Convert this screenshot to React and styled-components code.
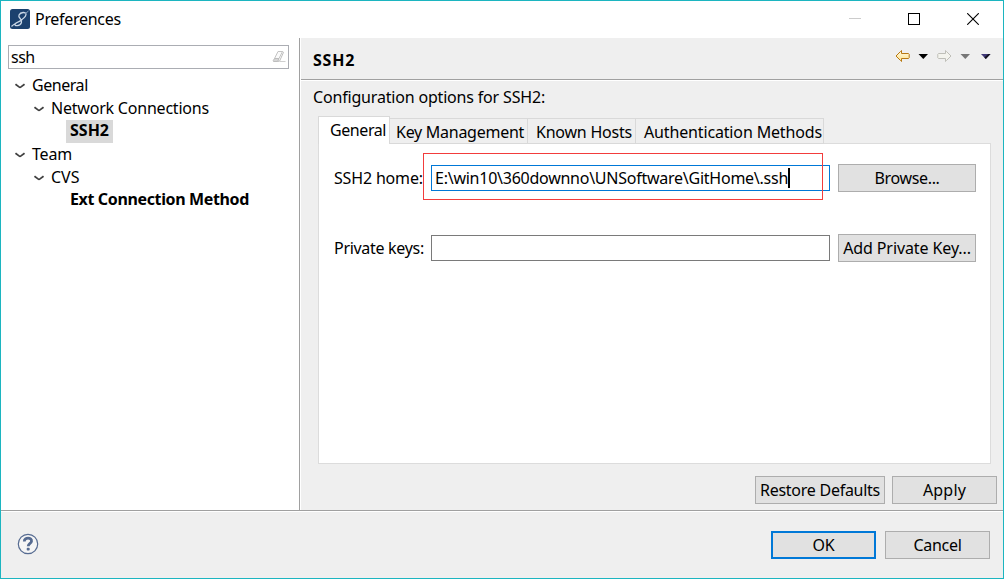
import React from "react";
import styled, { createGlobalStyle, css } from "styled-components";

const GlobalStyle = createGlobalStyle`
  * { box-sizing: border-box; }
  html, body { margin: 0; padding: 0; overflow: hidden; }
  body { font-family: "Noto Sans", "Open Sans", sans-serif; font-size: 16px; color: #000; }
`;

const Window = styled.div`
  width: 1004px;
  height: 579px;
  border: 1px solid #1cb5c0;
  background: #efefef;
  display: flex;
  flex-direction: column;
`;

const TitleBar = styled.header`
  height: 37px;
  flex: none;
  background: #fff;
  display: flex;
  align-items: center;
  padding: 0 24px 2px 9px;
`;

const Text = styled.span`
  display: block;
  white-space: pre;
  line-height: 20px;
  letter-spacing: ${(p) => p.$track ?? -0.22}px;
  font-weight: ${(p) => (p.$bold ? 700 : 400)};
`;

const Title = styled(Text)`
  margin-left: 5px;
  padding-top: 1px;
  flex: 1;
`;

const WindowControls = styled.div`
  display: flex;
  align-items: center;
  gap: 47px;
  svg { display: block; }
`;

const Main = styled.div`
  height: 472px;
  flex: none;
  display: flex;
`;

const Sidebar = styled.aside`
  width: 299px;
  flex: none;
  background: #fff;
  border-right: 1px solid #a0a0a0;
  padding: 7px 10px 0 7px;
`;

const Search = styled.div`
  height: 24px;
  border: 1px solid #abadb3;
  display: flex;
  align-items: center;
  justify-content: space-between;
  padding: 0 2px;
`;

const Tree = styled.div`
  padding-top: 5px;
  display: flex;
  flex-direction: column;
`;

const TreeRow = styled.div`
  height: 23px;
  display: flex;
  align-items: flex-start;
  padding-left: ${(p) => 7 + p.$level * 19}px;
`;

const TreeLabel = styled(Text)`
  padding: 0 4px;
  line-height: ${(p) => (p.$bold ? 20 : 22)}px;
  ${(p) => p.$selected && css`
    width: 47px;
    height: 23px;
    background: #d9d9d9;
  `}
`;

const Twisty = styled.div`
  width: 13px;
  padding-top: 9px;
  svg { display: block; }
`;

const Content = styled.main`
  flex: 1;
  border-left: 1px solid #fff;
  display: flex;
  flex-direction: column;
`;

const PageHeader = styled.div`
  height: 42px;
  flex: none;
  border-bottom: 1px solid #a0a0a0;
  box-shadow: 0 1px 0 #fff;
  display: flex;
  align-items: center;
  justify-content: space-between;
  padding: 2px 10px 0 12px;
`;

const Nav = styled.div`
  height: 32px;
  svg { display: block; }
`;

const Description = styled(Text)`
  padding: 7px 0 0 12px;
  height: 36px;
`;

const Tabs = styled.div`
  height: 28px;
  margin-left: 17px;
  display: flex;
  align-items: flex-end;
  position: relative;
`;

const Tab = styled.div`
  height: ${(p) => (p.$active ? 28 : 26)}px;
  width: ${(p) => p.$w}px;
  border: 1px solid #d9d9d9;
  border-bottom: ${(p) => (p.$active ? "0" : "1px solid #d9d9d9")};
  ${(p) => !p.$active && css`border-left: 0;`}
  background: ${(p) => (p.$active ? "#fff" : "#efefef")};
  padding: 3px 0 0 ${(p) => p.$pad}px;
  z-index: 1;
`;

const Panel = styled.section`
  width: 673px;
  height: 321px;
  margin: -1px 0 0 17px;
  border: 1px solid #dcdcdc;
  background: #fff;
  padding: 20px 14px 0 15px;
`;

const Field = styled.div`
  height: 28px;
  display: flex;
  align-items: center;
  margin-bottom: 42px;
`;

const FieldLabel = styled(Text)`
  width: 97px;
  flex: none;
`;

const Input = styled.div`
  position: relative;
  flex: none;
  width: 399px;
  height: 26px;
  border: 1px solid ${(p) => (p.$focus ? "#0078d7" : "#7a7a7a")};
  margin-right: 8px;
  padding-left: 3px;
  display: flex;
  align-items: center;
`;

const Caret = styled.i`
  width: 2px;
  height: 20px;
  background: #000;
`;

const Highlight = styled.div`
  position: absolute;
  left: -9px;
  top: -13px;
  width: 400px;
  height: 47px;
  border: 1px solid #f23c3c;
`;

const Button = styled.div`
  width: ${(p) => p.$w}px;
  height: 28px;
  flex: none;
  background: #e1e1e1;
  border: ${(p) => (p.$primary ? "2px solid #0078d7" : "1px solid #adadad")};
  display: flex;
  align-items: center;
  justify-content: center;
`;

const PageActions = styled.div`
  display: flex;
  justify-content: flex-end;
  gap: 7px;
  padding: 12px 6px 0 0;
`;

const Footer = styled.footer`
  flex: 1;
  border-top: 1px solid #a0a0a0;
  box-shadow: inset 0 1px 0 #fff;
  display: flex;
  align-items: center;
  gap: 9px;
  padding: 1px 13px 0 16px;
`;

const HelpButton = styled.div`
  flex: 1;
  padding-bottom: 2px;
  svg { display: block; }
`;

const AppIcon = () => (
  <svg width="20" height="20" viewBox="0 0 20 20">
    <rect width="20" height="20" rx="2.5" fill="#1b416e" />
    <path d="M1.500 17.500C5 13.500 15.500 11 16 5.500C16 2.500 10.500 3 9 6C7.500 9.500 13 9.500 11.500 13.500C10 17.500 4 17.500 5 15C6 13 9.500 13 12 11" fill="none" stroke="#c9d7e6" strokeWidth="1.300" />
    <path d="M15 5L18.500 2" stroke="#8fa8c4" />
  </svg>
);

const Eraser = () => (
  <svg width="14" height="14" viewBox="0 0 14 14">
    <path d="M6 1.500h4.500l-3.500 7h-4.500z" fill="#fafafa" stroke="#c4c4c4" />
    <path d="M2.500 8.500h4.500l-1.300 3h-4.200l-.3-.8z" fill="#d6d6d6" stroke="#bdbdbd" />
    <path d="M10.500 1.500l1 .8-4 9h-2" fill="none" stroke="#bdbdbd" />
    <path d="M8 11.500h5.500" stroke="#cfcfcf" />
  </svg>
);

const Chevron = () => (
  <svg width="10" height="6" viewBox="0 0 10 6">
    <path d="M.5 1.200L4 3.900Q5 4.700 6 3.900L9.500 1.200" fill="none" stroke="#404040" strokeWidth="1.700" />
  </svg>
);

const NavIcons = () => (
  <svg width="98" height="24" viewBox="0 0 98 24">
    <defs>
      <linearGradient id="back" x1="0" y1="0" x2="0" y2="1">
        <stop offset="0" stopColor="#fffbe5" />
        <stop offset="1" stopColor="#ffe28a" />
      </linearGradient>
    </defs>
    <path d="M1 12L5.500 7.500L6.500 6.500V9.500H13.500L14.200 10.200V13.800L13.500 14.500H6.500V17.500L5.500 16.500z" fill="url(#back)" stroke="#b87812" />
    <path d="M23.500 10h9.500l-4.700 5z" fill="#000" />
    <path d="M56 12L51.500 7.500L50.500 6.500V9.500H43.500L42.800 10.200V13.800L43.500 14.500H50.500V17.500L51.500 16.500z" fill="#f4f4ee" stroke="#bfbfb8" />
    <path d="M65.500 10h9.500l-4.700 5z" fill="#777" />
    <path d="M86 10h9.500l-4.700 5z" fill="#3f3878" />
    <path d="M95.500 10l-4.700 5-1.500-1.600 4-3.400z" fill="#15131f" />
  </svg>
);

const HelpIcon = () => (
  <svg width="22" height="22" viewBox="0 0 22 22">
    <circle cx="11" cy="11" r="9.700" fill="#f5f5f5" stroke="#566b91" strokeWidth="1.200" />
    <path d="M7.300 8.500C7.300 3.800 15 4.200 14.500 8.300C14.200 10.500 11.200 10.300 11.200 13.300" fill="none" stroke="#566b91" strokeWidth="2.800" />
    <rect x="9.700" y="14.800" width="3" height="2.800" rx="1" fill="#566b91" />
  </svg>
);

const TREE = [
  { label: "General", level: 0, open: true, track: -0.45 },
  { label: "Network Connections", level: 1, open: true, track: -0.21 },
  { label: "SSH2", level: 2, bold: true, selected: true, track: 0 },
  { label: "Team", level: 0, open: true, track: -0.2 },
  { label: "CVS", level: 1, open: true, track: 0 },
  { label: "Ext Connection Method", level: 2, bold: true, track: -0.36 },
];

export default function App() {
  return (
    <>
      <GlobalStyle />
      <Window>
        <TitleBar>
          <AppIcon />
          <Title $track={-0.3}>Preferences</Title>
          <WindowControls>
            <svg width="12" height="12"><path d="M0 5.500h12" stroke="#ccc" /></svg>
            <svg width="12" height="12"><rect x=".5" y=".5" width="11" height="11" fill="none" stroke="#000" /></svg>
            <svg width="12" height="12"><path d="M.2 .2l11.600 11.600M11.800 .2l-11.600 11.600" stroke="#000" strokeWidth="1.100" /></svg>
          </WindowControls>
        </TitleBar>
        <Main>
          <Sidebar>
            <Search><Text $track={-0.5}>ssh</Text><Eraser /></Search>
            <Tree>
              {TREE.map((n) => (
                <TreeRow key={n.label} $level={n.level}>
                  <Twisty>{n.open && <Chevron />}</Twisty>
                  <TreeLabel $bold={n.bold} $selected={n.selected} $track={n.track}>{n.label}</TreeLabel>
                </TreeRow>
              ))}
            </Tree>
          </Sidebar>
          <Content>
            <PageHeader><Text $bold $track={0.8}>SSH2</Text><Nav><NavIcons /></Nav></PageHeader>
            <Description $track={-0.18}>Configuration options for SSH2:</Description>
            <Tabs>
              <Tab $active $w={72} $pad={11}><Text $track={-0.42}>General</Text></Tab>
              <Tab $w={138} $pad={6}><Text $track={-0.27}>Key Management</Text></Tab>
              <Tab $w={108} $pad={8}><Text $track={-0.22}>Known Hosts</Text></Tab>
              <Tab $w={188} $pad={8}><Text $track={-0.15}>Authentication Methods</Text></Tab>
            </Tabs>
            <Panel>
              <Field>
                <FieldLabel $track={-0.17}>SSH2 home:</FieldLabel>
                <Input $focus><Text $track={-0.25}>E:\win10\360downno\UNSoftware\GitHome\.ssh</Text><Caret /><Highlight /></Input>
                <Button $w={138}><Text $track={-0.35}>Browse...</Text></Button>
              </Field>
              <Field>
                <FieldLabel $track={-0.3}>Private keys:</FieldLabel>
                <Input />
                <Button $w={138}><Text $track={-0.1}>Add Private Key...</Text></Button>
              </Field>
            </Panel>
            <PageActions>
              <Button $w={130}><Text $track={-0.26}>Restore Defaults</Text></Button>
              <Button $w={105}><Text $track={0.2}>Apply</Text></Button>
            </PageActions>
          </Content>
        </Main>
        <Footer>
          <HelpButton><HelpIcon /></HelpButton>
          <Button $w={105} $primary><Text>OK</Text></Button>
          <Button $w={105}><Text $track={-0.3}>Cancel</Text></Button>
        </Footer>
      </Window>
    </>
  );
}
